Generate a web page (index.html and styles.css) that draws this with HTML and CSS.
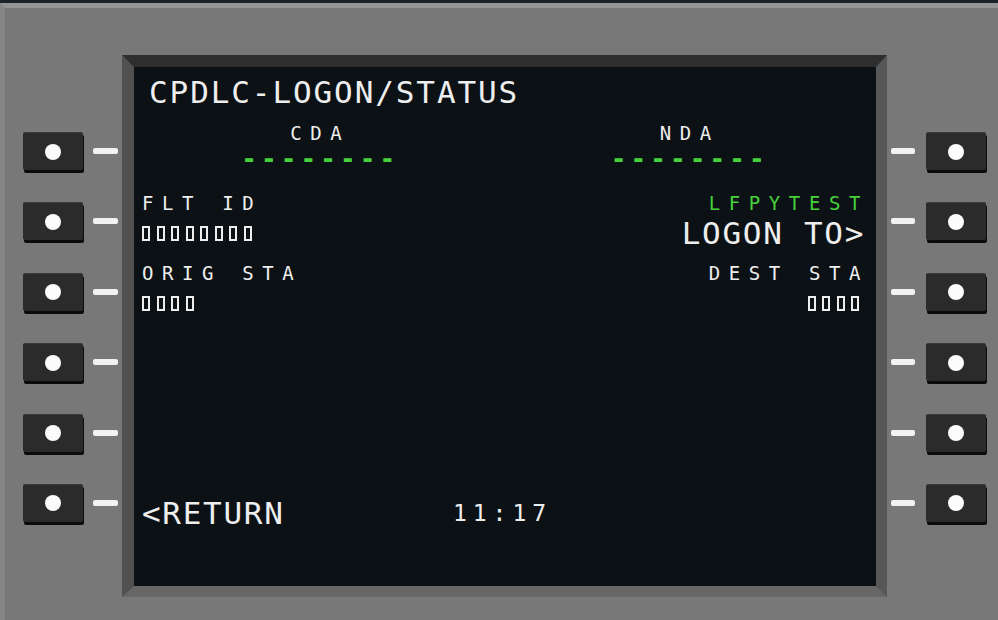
FILE: index.html
```html
<!DOCTYPE html>
<html lang="en">
<head>
  <meta charset="UTF-8">
  <title>MCDU - CPDLC Logon</title>
  <link rel="stylesheet" href="styles.css">
</head>
<body>

  <!-- strip of cockpit visible above the unit -->
  <div class="strip"></div>

  <div class="panel">
    <!-- left line select keys -->
    <div class="lsk lsk-left">
      <div class="key"><span class="btn"><i></i></span><span class="tick"></span></div>
      <div class="key"><span class="btn"><i></i></span><span class="tick"></span></div>
      <div class="key"><span class="btn"><i></i></span><span class="tick"></span></div>
      <div class="key"><span class="btn"><i></i></span><span class="tick"></span></div>
      <div class="key"><span class="btn"><i></i></span><span class="tick"></span></div>
      <div class="key"><span class="btn"><i></i></span><span class="tick"></span></div>
    </div>

    <!-- display -->
    <div class="bezel">
      <div class="screen">
        <div class="title">CPDLC-LOGON/STATUS</div>

        <div class="line lbl split"><span>CDA</span><span>NDA</span></div>
        <div class="line dat split dashes"><span>--------</span><span>--------</span></div>

        <div class="line lbl"><span>FLT ID</span><span class="green right-sm">LFPYTEST</span></div>
        <div class="line dat">
          <span class="boxes"><b></b><b></b><b></b><b></b><b></b><b></b><b></b><b></b></span>
          <span class="big right-big">LOGON TO&gt;</span>
        </div>

        <div class="line lbl"><span>ORIG STA</span><span class="right-sm">DEST STA</span></div>
        <div class="line dat">
          <span class="boxes"><b></b><b></b><b></b><b></b></span>
          <span class="boxes boxes-r"><b></b><b></b><b></b><b></b></span>
        </div>

        <div class="line lbl"></div>
        <div class="line dat"></div>
        <div class="line lbl"></div>
        <div class="line dat"></div>
        <div class="line lbl"></div>

        <div class="line dat bottom">
          <span class="big">&lt;RETURN</span>
          <span class="time">11:17</span>
          <span></span>
        </div>
      </div>
    </div>

    <!-- right line select keys -->
    <div class="lsk lsk-right">
      <div class="key"><span class="tick"></span><span class="btn"><i></i></span></div>
      <div class="key"><span class="tick"></span><span class="btn"><i></i></span></div>
      <div class="key"><span class="tick"></span><span class="btn"><i></i></span></div>
      <div class="key"><span class="tick"></span><span class="btn"><i></i></span></div>
      <div class="key"><span class="tick"></span><span class="btn"><i></i></span></div>
      <div class="key"><span class="tick"></span><span class="btn"><i></i></span></div>
    </div>
  </div>

</body>
</html>
```

FILE: styles.css
```css
body {
  margin: 0;
  padding: 0;
  width: 998px;
  height: 620px;
  overflow: hidden;
  background-color: #787878;
  font-family: "DejaVu Sans Mono", "Liberation Mono", monospace;
}

/* Bande sombre au-dessus du boitier */
.strip {
  height: 3px;
  background-color: #1c2226;
}

/* Boitier gris */
.panel {
  display: flex;
  align-items: flex-start;
  height: 612px;
  border-top: 5px solid #949494;
  border-left: 5px solid #868686;
  background-color: #787878;
}

/* Colonnes des touches LSK */
.lsk {
  display: flex;
  flex-direction: column;
  gap: 32.4px;
  padding-top: 124px;
}

.lsk-left {
  width: 99px;
  padding-left: 18px;
}

.lsk-right {
  margin-left: 4px;
}

.key {
  display: flex;
  align-items: center;
  height: 38px;
}

.btn {
  display: flex;
  justify-content: center;
  align-items: center;
  width: 60px;
  height: 38px;
  box-sizing: border-box;
  background-color: #2b2b2b;
  border-top: 1px solid #3a3a3a;
  border-radius: 2px;
  box-shadow: 1px 3px 0 #0b0b0b;
}

.btn i {
  width: 16px;
  height: 16px;
  border-radius: 50%;
  background-color: #fbfbfb;
}

.tick {
  width: 25px;
  height: 6px;
  border-radius: 2px;
  background-color: #f2f2f2;
}

.lsk-left .tick {
  margin-left: 10px;
}

.lsk-right .tick {
  width: 24px;
  margin-right: 11px;
}

/* Cadre de l'ecran */
.bezel {
  margin-top: 47px;
  border-style: solid;
  border-width: 12px 11px 11px 12px;
  border-color: #2e2e2e #575757 #676767 #505050;
}

.screen {
  width: 742px;
  height: 519px;
  box-sizing: border-box;
  padding: 0 13px 0 8px;
  background-color: #0b1115;
  color: #eeeeee;
}

.title {
  height: 51px;
  line-height: 51px;
  padding-left: 7px;
  font-size: 31px;
  letter-spacing: 1.9px;
}

/* Lignes : etiquette (petite) puis donnee */
.line {
  display: flex;
  justify-content: space-between;
  align-items: center;
  font-size: 19px;
  letter-spacing: 8.6px;
}

.lbl {
  height: 30px;
  line-height: 30px;
}

.dat {
  height: 40px;
  line-height: 30px;
  align-items: flex-start;
}

.split {
  display: grid;
  grid-template-columns: 1fr 1fr;
  text-align: center;
}

.split span:first-child {
  margin-right: 4px;
}

.split span:last-child {
  margin-left: 14px;
}

/* Tirets verts sous CDA / NDA */
.dashes {
  line-height: 22px;
  font-size: 26px;
  font-weight: bold;
  letter-spacing: 4.1px;
  color: #46d23c;
}

.green {
  color: #46d23c;
}

.right-sm {
  margin-right: -6px;
}

.big {
  font-size: 31px;
  letter-spacing: 1.7px;
}

.right-big {
  margin-right: -2px;
}

/* Cases vides de saisie */
.boxes {
  display: flex;
  gap: 6.5px;
  height: 30px;
  align-items: center;
}

.boxes b {
  width: 8px;
  height: 15px;
  box-sizing: border-box;
  border: 2px solid #eeeeee;
}

.boxes-r {
  margin-right: 4px;
}

.bottom {
  display: grid;
  grid-template-columns: 1fr auto 1fr;
}

.time {
  font-size: 23px;
  letter-spacing: 6px;
}
```
